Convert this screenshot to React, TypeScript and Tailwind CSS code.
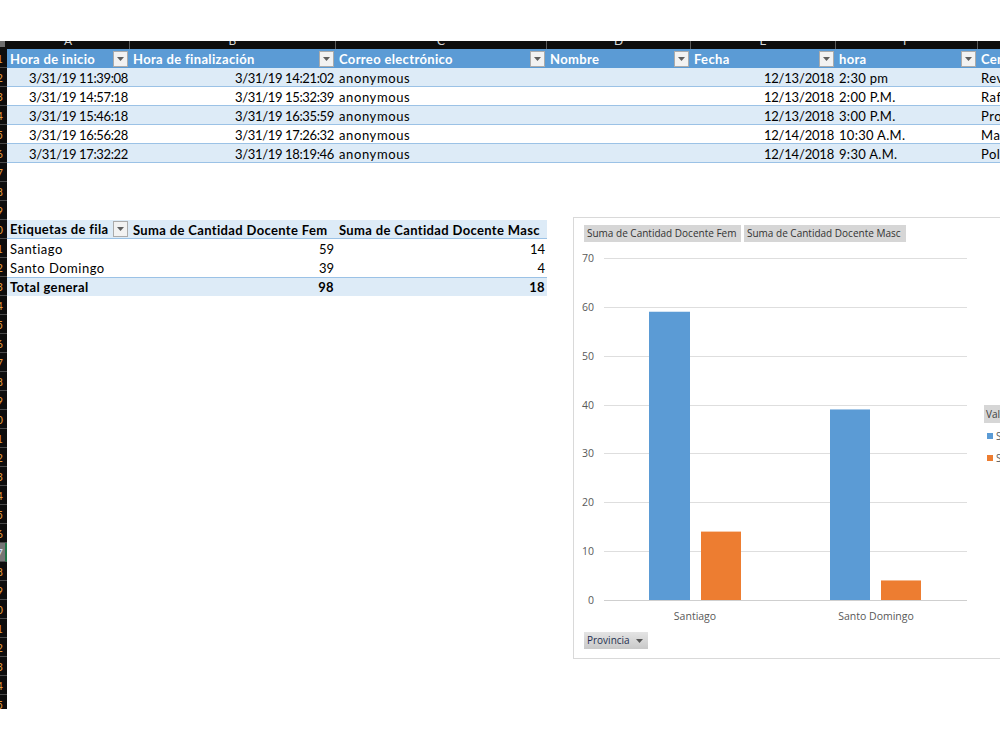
import React from 'react'

// Sheet columns (row-header strip is 7px wide, then A..G)
const cols = [
  { letter: 'A', w: 'w-[123px]' },
  { letter: 'B', w: 'w-[206px]' },
  { letter: 'C', w: 'w-[211px]' },
  { letter: 'D', w: 'w-[144px]' },
  { letter: 'E', w: 'w-[145px]' },
  { letter: 'F', w: 'w-[142px]' },
  { letter: 'G', w: 'w-[120px]' },
]

const headers = [
  'Hora de inicio',
  'Hora de finalización',
  'Correo electrónico',
  'Nombre',
  'Fecha',
  'hora',
  'Centro educativo',
]

// per column: right aligned numbers get tighter tracking, words a bit wider
const cellCls = [
  'pr-[2px] text-right tracking-[-0.35px]',
  'pr-[2px] text-right tracking-[-0.35px]',
  'pl-[3px] tracking-[0.6px]',
  'pl-[3px]',
  'pr-[2px] text-right tracking-[-0.2px]',
  'pl-[3px] tracking-[0.3px]',
  'pl-[3px] tracking-[0.5px]',
]

const rows = [
  ['3/31/19 11:39:08', '3/31/19 14:21:02', 'anonymous', '', '12/13/2018', '2:30 pm', 'Revolución'],
  ['3/31/19 14:57:18', '3/31/19 15:32:39', 'anonymous', '', '12/13/2018', '2:00 P.M.', 'Rafael'],
  ['3/31/19 15:46:18', '3/31/19 16:35:59', 'anonymous', '', '12/13/2018', '3:00 P.M.', 'Profesor'],
  ['3/31/19 16:56:28', '3/31/19 17:26:32', 'anonymous', '', '12/14/2018', '10:30 A.M.', 'María'],
  ['3/31/19 17:32:22', '3/31/19 18:19:46', 'anonymous', '', '12/14/2018', '9:30 A.M.', 'Politécnico'],
]

const pivotRows = [
  { label: 'Santiago', fem: 59, masc: 14 },
  { label: 'Santo Domingo', fem: 39, masc: 4 },
]

const rowNumbers = Array.from({ length: 35 }, (_, i) => i + 1)

function FilterButton() {
  return (
    <div className="flex h-[16px] w-[15px] shrink-0 items-center justify-center border border-[#ababab] bg-[#f2f2f2]">
      <svg width="7" height="4" viewBox="0 0 7 4">
        <path d="M0 0h7L3.5 4z" fill="#5f5f5f" />
      </svg>
    </div>
  )
}

function Chart() {
  const unit = (600 - 258) / 70
  const yOf = (v: number) => 358 - v * unit // svg coords, 0 -> 358
  const ticks = [0, 10, 20, 30, 40, 50, 60, 70]
  const bars = [
    { x: 75, w: 41, v: 59, c: '#5b9bd5' },
    { x: 127, w: 40, v: 14, c: '#ed7d31' },
    { x: 256, w: 40, v: 39, c: '#5b9bd5' },
    { x: 307, w: 40, v: 4, c: '#ed7d31' },
  ]

  return (
    <div className="absolute left-[573px] top-[217px] h-[442px] w-[440px] border border-[#d9d9d9] bg-white pt-[7px] font-['Open_Sans']">
      {/* Field buttons */}
      <div className="ml-[10px] flex h-[17px] gap-[3px] text-[10px] leading-[17px] text-[#333]">
        <div className="w-[157px] whitespace-nowrap bg-[#d6d6d6] pl-[3px]">Suma de Cantidad Docente Fem</div>
        <div className="w-[162px] whitespace-nowrap bg-[#d6d6d6] pl-[3px]">Suma de Cantidad Docente Masc</div>
      </div>

      <svg width="440" height="388" className="block">
        {ticks.map((t) => (
          <g key={t}>
            <line
              x1="30"
              x2="393"
              y1={Math.round(yOf(t)) + 0.5}
              y2={Math.round(yOf(t)) + 0.5}
              stroke={t === 0 ? '#cfcfcf' : '#dedede'}
              strokeWidth="1"
            />
            <text x="20" y={yOf(t) + 4} fontSize="10.5" fill="#595959" textAnchor="end">
              {t}
            </text>
          </g>
        ))}
        {bars.map((b, i) => (
          <rect key={i} x={b.x} y={yOf(b.v)} width={b.w} height={b.v * unit} fill={b.c} />
        ))}
        <text x="121" y="378" fontSize="10.5" fill="#595959" textAnchor="middle">
          Santiago
        </text>
        <text x="302" y="378" fontSize="10.5" fill="#595959" textAnchor="middle">
          Santo Domingo
        </text>

        {/* Legend */}
        <rect x="410" y="163" width="40" height="18" fill="#d6d6d6" />
        <text x="412" y="176" fontSize="10" fill="#404040">
          Valores
        </text>
        <rect x="413" y="191" width="6" height="6" fill="#5b9bd5" />
        <text x="422" y="198" fontSize="10" fill="#595959">
          Suma de Cantidad Docente Fem
        </text>
        <rect x="413" y="213" width="6" height="6" fill="#ed7d31" />
        <text x="422" y="220" fontSize="10" fill="#595959">
          Suma de Cantidad Docente Masc
        </text>
      </svg>

      <div className="ml-[10px] mt-[2px] flex h-[17px] w-[64px] items-center gap-[6px] bg-gradient-to-b from-[#e4e4e4] to-[#c9c9c9] pl-[3px] text-[10px] text-[#1f2f4f]">
        <span>Provincia</span>
        <svg width="7" height="4" viewBox="0 0 7 4">
          <path d="M0 0h7L3.5 4z" fill="#555" />
        </svg>
      </div>
    </div>
  )
}

export default function App() {
  return (
    <div className="relative h-[750px] w-[1000px] overflow-hidden bg-white font-['Lato'] text-[13px] text-black">
      <div className="h-[41px]" />

      {/* Column letters (top is cropped) */}
      <div className="flex h-[8px] overflow-hidden bg-[#0d0d0d]">
        <div className="w-[7px] shrink-0">
          <div className="h-[6px] w-[5px] bg-[#6e6e6e]" />
        </div>
        {cols.map((c) => (
          <div key={c.letter} className={`${c.w} shrink-0 border-r border-[#5a5a5a]`}>
            <div className="-mt-[10px] flex h-[20px] items-center justify-center text-[12px] text-[#d8d8d8]">
              {c.letter}
            </div>
          </div>
        ))}
      </div>

      <div className="flex h-[660px] overflow-hidden">
        {/* Row headers (mostly cropped) */}
        <div className="flex w-[7px] shrink-0 flex-col">
          {rowNumbers.map((n) => (
            <div
              key={n}
              className={
                n === 27
                  ? 'flex h-[19px] shrink-0 justify-end overflow-hidden border-b border-r-2 border-b-[#4a4a4a] border-r-[#217346] bg-[#767676] pr-[2px] text-[11px] leading-[19px] text-[#cfe3ff]'
                  : 'flex h-[19px] shrink-0 justify-end overflow-hidden border-b border-[#4a4a4a] bg-[#0d0d0d] pr-[4px] text-[11px] leading-[19px] text-[#e49a3a]'
              }
            >
              <span className="whitespace-nowrap">{n}</span>
            </div>
          ))}
        </div>

        <div className="flex flex-col">
          {/* Data table */}
          <div className="flex h-[19px] bg-[#5b9bd5] font-bold tracking-[0.35px] text-white">
            {cols.map((c, i) => (
              <div key={c.letter} className={`${c.w} flex shrink-0 items-center justify-between overflow-hidden pl-[3px] pr-[2px]`}>
                <span className="whitespace-nowrap pt-[2px]">{headers[i]}</span>
                {i < 6 && <FilterButton />}
              </div>
            ))}
          </div>
          {rows.map((r, ri) => (
            <div
              key={ri}
              className={`flex h-[19px] border-b border-[#9bc2e6] ${ri % 2 === 0 ? 'bg-[#ddebf7]' : 'bg-white'}`}
            >
              {cols.map((c, i) => (
                <div key={c.letter} className={`${c.w} ${cellCls[i]} shrink-0 overflow-hidden whitespace-nowrap leading-[20px]`}>
                  {r[i]}
                </div>
              ))}
            </div>
          ))}

          <div className="h-[57px]" />

          {/* Pivot table */}
          <div className="flex h-[19px] w-[540px] border-b border-[#9bc2e6] bg-[#ddebf7] font-bold tracking-[0.35px]">
            <div className="flex w-[123px] shrink-0 items-center justify-between pl-[3px] pr-[2px]">
              <span className="whitespace-nowrap pt-[2px]">Etiquetas de fila</span>
              <FilterButton />
            </div>
            <div className="w-[206px] shrink-0 whitespace-nowrap pl-[3px] leading-[20px]">Suma de Cantidad Docente Fem</div>
            <div className="w-[211px] shrink-0 whitespace-nowrap pl-[3px] leading-[20px]">Suma de Cantidad Docente Masc</div>
          </div>
          {pivotRows.map((p) => (
            <div key={p.label} className="flex h-[19px] w-[540px] leading-[20px]">
              <div className="w-[123px] shrink-0 whitespace-nowrap pl-[3px] tracking-[0.5px]">{p.label}</div>
              <div className="w-[206px] shrink-0 pr-[2px] text-right">{p.fem}</div>
              <div className="w-[211px] shrink-0 pr-[2px] text-right">{p.masc}</div>
            </div>
          ))}
          <div className="flex h-[19px] w-[540px] border-t border-[#9bc2e6] bg-[#ddebf7] font-bold leading-[19px] tracking-[0.35px]">
            <div className="w-[123px] shrink-0 whitespace-nowrap pl-[3px]">Total general</div>
            <div className="w-[206px] shrink-0 pr-[2px] text-right">98</div>
            <div className="w-[211px] shrink-0 pr-[2px] text-right">18</div>
          </div>
        </div>
      </div>

      <Chart />
    </div>
  )
}
